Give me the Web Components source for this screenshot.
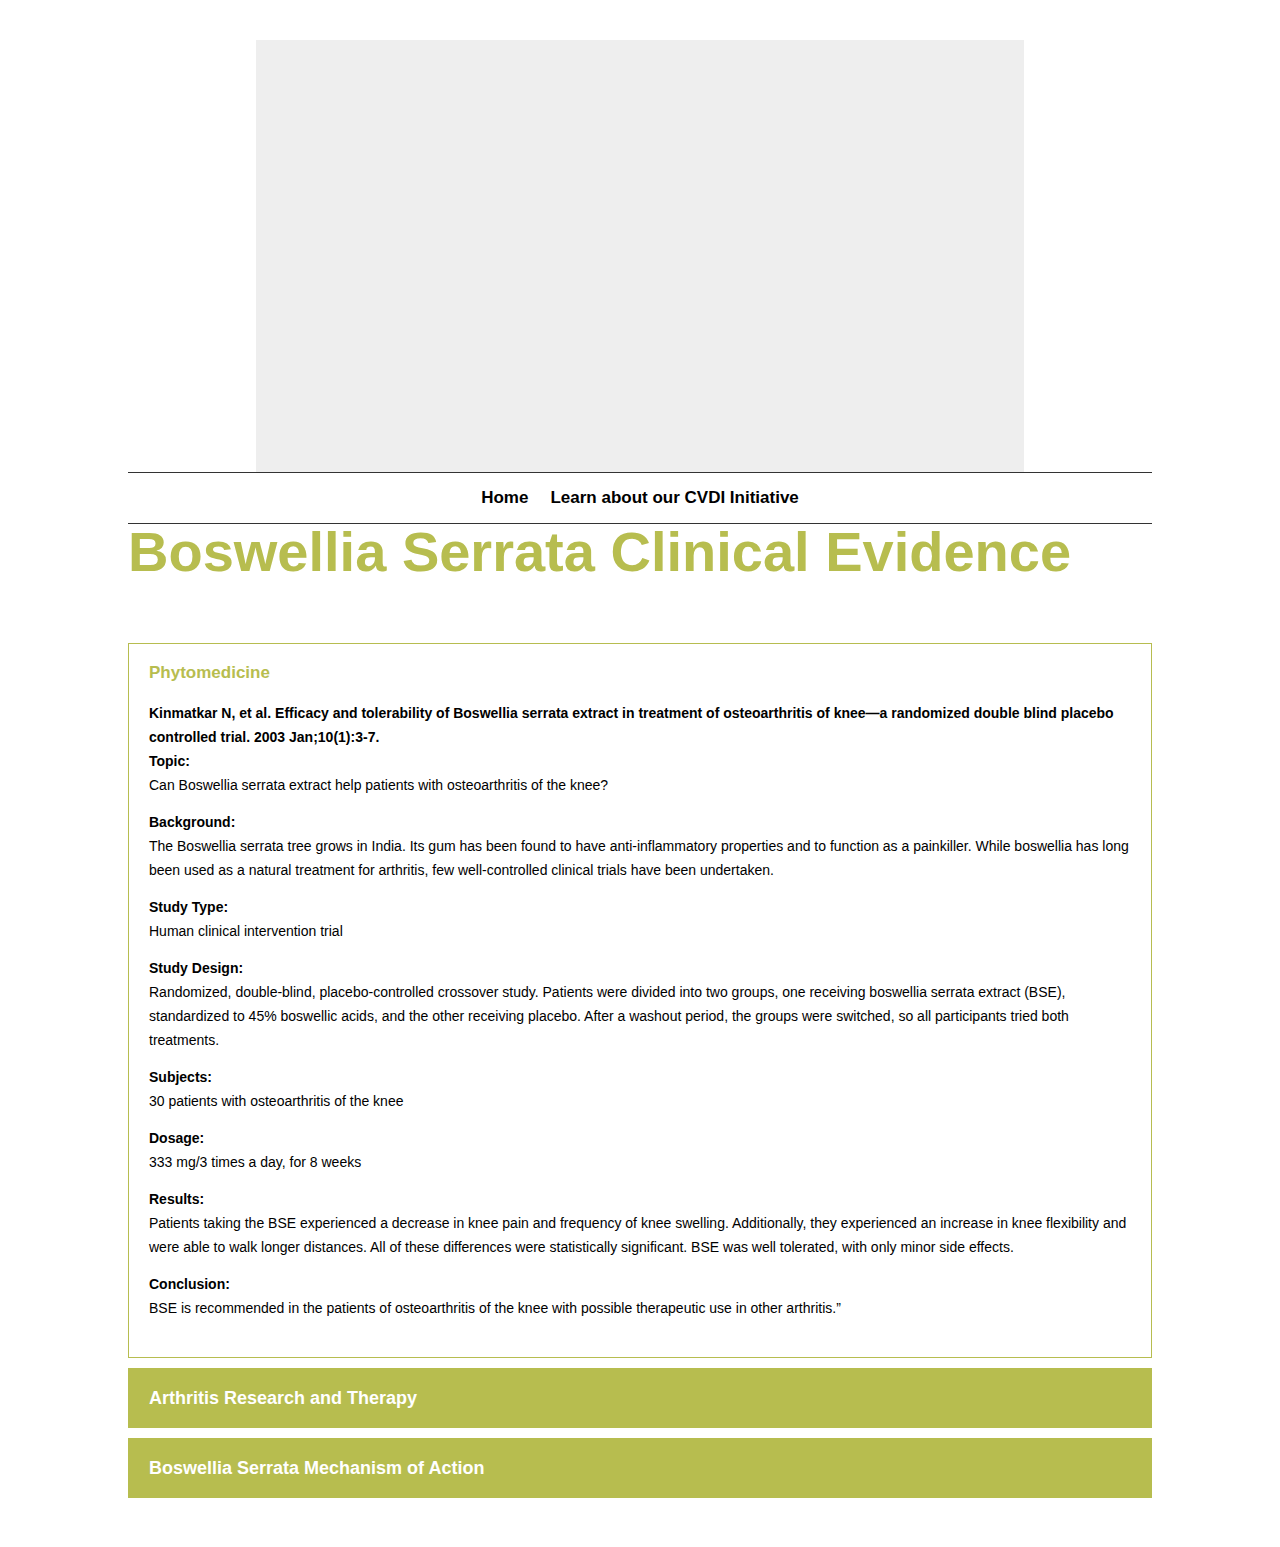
<!DOCTYPE html>
<html lang="en">
<head>
<meta charset="utf-8">
<meta name="viewport" content="width=device-width, initial-scale=1">
<title>Boswellia Serrata Clinical Evidence</title>
<style>
  :root { --accent: #b7bd4f; --rule: #333; }
  body { margin: 0; background: #fff; color: #000; font: 14px/24px "Liberation Sans", Arial, sans-serif; }
</style>
</head>
<body>
<evidence-page>
  <hero-media slot="hero"></hero-media>
  <site-nav slot="nav">
    <nav-link href="#home">Home</nav-link>
    <nav-link href="#cvdi">Learn about our CVDI Initiative</nav-link>
  </site-nav>
  <page-title slot="title">Boswellia Serrata Clinical Evidence</page-title>
  <toggle-list>
    <toggle-item open>
      <span slot="heading">Phytomedicine</span>
      <study-section>
        <span slot="citation">Kinmatkar N, et al. Efficacy and tolerability of Boswellia serrata extract in treatment of osteoarthritis of knee—a randomized double blind placebo controlled trial. 2003 Jan;10(1):3-7.</span>
        <span slot="label">Topic:</span>Can Boswellia serrata extract help patients with osteoarthritis of the knee?
      </study-section>
      <study-section><span slot="label">Background:</span>The Boswellia serrata tree grows in India. Its gum has been found to have anti-inflammatory properties and to function as a painkiller. While boswellia has long been used as a natural treatment for arthritis, few well-controlled clinical trials have been undertaken.</study-section>
      <study-section><span slot="label">Study Type:</span>Human clinical intervention trial</study-section>
      <study-section><span slot="label">Study Design:</span>Randomized, double-blind, placebo-controlled crossover study. Patients were divided into two groups, one receiving boswellia serrata extract (BSE), standardized to 45% boswellic acids, and the other receiving placebo. After a washout period, the groups were switched, so all participants tried both treatments.</study-section>
      <study-section><span slot="label">Subjects:</span>30 patients with osteoarthritis of the knee</study-section>
      <study-section><span slot="label">Dosage:</span>333 mg/3 times a day, for 8 weeks</study-section>
      <study-section><span slot="label">Results:</span>Patients taking the BSE experienced a decrease in knee pain and frequency of knee swelling. Additionally, they experienced an increase in knee flexibility and were able to walk longer distances. All of these differences were statistically significant. BSE was well tolerated, with only minor side effects.</study-section>
      <study-section><span slot="label">Conclusion:</span>BSE is recommended in the patients of osteoarthritis of the knee with possible therapeutic use in other arthritis.”</study-section>
    </toggle-item>
    <toggle-item><span slot="heading">Arthritis Research and Therapy</span></toggle-item>
    <toggle-item><span slot="heading">Boswellia Serrata Mechanism of Action</span></toggle-item>
  </toggle-list>
</evidence-page>

<script>
  const define = (name, html, setup) => {
    const template = document.createElement('template');
    template.innerHTML = html;
    customElements.define(name, class extends HTMLElement {
      constructor() {
        super();
        this.attachShadow({ mode: 'open' }).append(template.content.cloneNode(true));
      }
      connectedCallback() {
        if (setup && !this.ready) { this.ready = true; setup(this, this.shadowRoot); }
      }
    });
  };

  define('evidence-page', `
    <style>
      :host { display: block; width: 80%; margin: 0 auto; padding: 40px 0 49px; }
    </style>
    <header><slot name="hero"></slot><slot name="nav"></slot></header>
    <main><slot name="title"></slot><slot></slot></main>`);

  // Empty 16:9 video area
  define('hero-media', `
    <style>
      :host { display: block; width: 75%; margin: 0 auto; aspect-ratio: 16 / 9; background: #eee; }
    </style>`);

  define('site-nav', `
    <style>
      :host { display: block; border: solid var(--rule); border-width: 1px 0; }
      nav { display: flex; flex-wrap: wrap; justify-content: center; column-gap: 22px; padding: 13px 0; }
    </style>
    <nav aria-label="Main"><slot></slot></nav>`);

  define('nav-link', `
    <style>
      :host { display: block; }
      a { color: inherit; font-size: 17px; font-weight: 700; text-decoration: none; }
    </style>
    <a><slot></slot></a>`,
    (host, root) => { root.querySelector('a').href = host.getAttribute('href'); });

  define('page-title', `
    <style>
      :host { display: block; margin-bottom: 63px; }
      h1 { margin: 0; color: var(--accent); font-size: 56px; line-height: 56px; font-weight: 700; }
    </style>
    <h1><slot></slot></h1>`);

  define('toggle-list', `
    <style>
      :host { display: flex; flex-direction: column; gap: 10px; }
    </style>
    <slot></slot>`);

  define('toggle-item', `
    <style>
      :host { display: block; border: 1px solid var(--accent); background: var(--accent); }
      :host([open]) { background: #fff; }
      h2 { margin: 0; font-size: 18px; line-height: 18px; }
      button { display: block; width: 100%; margin: 0; padding: 20px; border: 0; background: none;
        color: #fff; font: inherit; font-weight: 700; text-align: left; cursor: pointer; }
      :host([open]) button { padding-bottom: 19px; color: var(--accent); font-size: 17px; }
      .body { display: none; }
      :host([open]) .body { display: flex; flex-direction: column; gap: 13px; padding: 0 20px 37px; }
    </style>
    <h2><button type="button" aria-controls="body"><slot name="heading"></slot></button></h2>
    <div class="body" id="body"><slot></slot></div>`,
    (host, root) => {
      const button = root.querySelector('button');
      const sync = () => button.setAttribute('aria-expanded', host.hasAttribute('open'));
      button.addEventListener('click', () => { host.toggleAttribute('open'); sync(); });
      sync();
    });

  define('study-section', `
    <style>
      :host { display: block; }
      p { margin: 0; }
      strong { display: block; font-weight: 700; }
    </style>
    <strong><slot name="citation"></slot></strong>
    <strong><slot name="label"></slot></strong>
    <p><slot></slot></p>`);
</script>
</body>
</html>
